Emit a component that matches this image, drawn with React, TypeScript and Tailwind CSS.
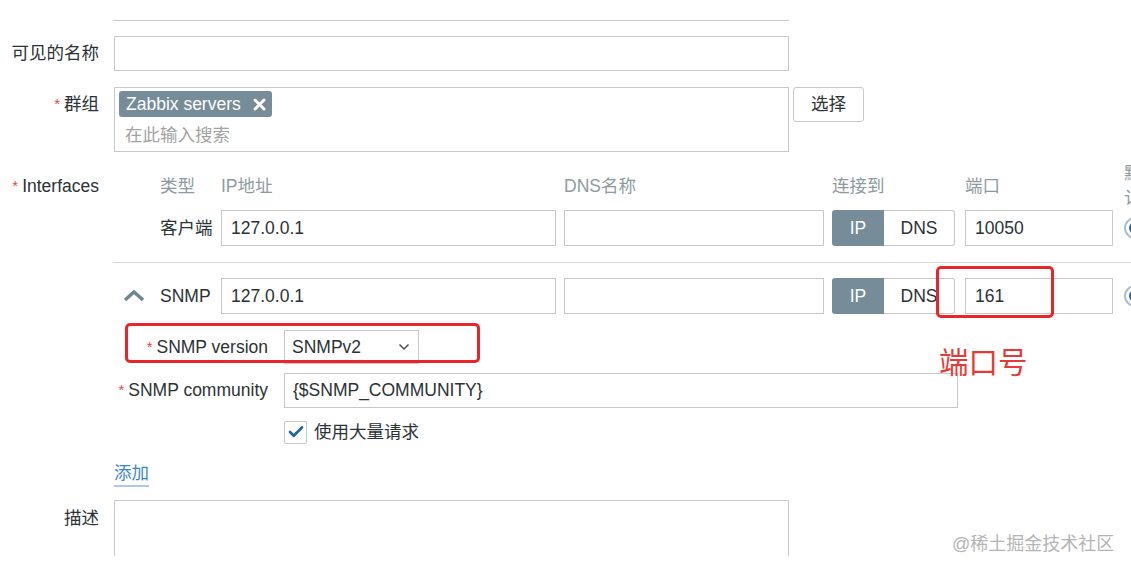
import { Check, ChevronDown } from 'lucide-react';

const font = "font-['Liberation_Sans','Noto_Sans_CJK_SC',sans-serif]";

function Star() {
  return <span className="text-[#d64e4e] mr-[4px] text-[15px]">*</span>;
}

function Label({ children, req }: { children: React.ReactNode; req?: boolean }) {
  return (
    <div className="w-[99px] shrink-0 h-[35px] flex items-center justify-end whitespace-nowrap">
      {req && <Star />}
      {children}
    </div>
  );
}

function Radio() {
  return (
    <div className="w-[22px] h-[22px] shrink-0 rounded-full border-2 border-[#a9bfcf] flex items-center justify-center">
      <div className="w-[12px] h-[12px] rounded-full bg-[#1f65a6]" />
    </div>
  );
}

function Toggle() {
  return (
    <div className="flex w-[123px] h-[36px] shrink-0">
      <div className="w-[52px] flex items-center justify-center bg-[#768d99] text-white rounded-l-[3px]">IP</div>
      <div className="flex-1 flex items-center justify-center border border-l-0 border-[#c8c8c8] rounded-r-[3px]">DNS</div>
    </div>
  );
}

function IfaceRow({ type, port, chevron }: { type: string; port: string; chevron?: boolean }) {
  return (
    <div className="flex items-center gap-[8px] h-[36px]">
      <div className="w-[100px] shrink-0 flex items-center">
        <div className="w-[47px] pl-[10px]">
          {chevron && (
            <svg width="22" height="12" viewBox="0 0 22 12">
              <polyline points="2,10 11,2 20,10" fill="none" stroke="#6f8791" strokeWidth="3.5" />
            </svg>
          )}
        </div>
        <span>{type}</span>
      </div>
      <div className="w-[335px] h-[36px] shrink-0 border border-[#c8c8c8] flex items-center px-[9px]">127.0.0.1</div>
      <div className="w-[260px] h-[36px] shrink-0 border border-[#c8c8c8]" />
      <Toggle />
      <div className="w-[148px] h-[36px] shrink-0 border border-[#c8c8c8] flex items-center px-[9px] ml-[2px]">{port}</div>
      <div className="ml-[3px]">
        <Radio />
      </div>
    </div>
  );
}

export default function App() {
  return (
    <div className={`relative w-[1131px] h-[571px] overflow-hidden bg-white text-[17.5px] text-[#2b3236] ${font}`}>
      <div className="flex flex-col">
        {/* cut-off field at the top */}
        <div className="ml-[113px] w-[676px] h-[21px] border-b border-[#c8c8c8]" />

        {/* visible name */}
        <div className="flex gap-[15px] mt-[15px]">
          <Label>可见的名称</Label>
          <div className="w-[675px] h-[35px] border border-[#c8c8c8]" />
        </div>

        {/* groups */}
        <div className="flex gap-[15px] mt-[16px]">
          <Label req>群组</Label>
          <div className="w-[675px] h-[65px] border border-[#c8c8c8] px-[4px] pt-[3px]">
            <div className="inline-flex items-center h-[26px] bg-[#768d99] text-white rounded-[3px] pl-[7px] pr-[6px] gap-[12px]">
              <span>Zabbix servers</span>
              <svg width="13" height="13" viewBox="0 0 13 13">
                <path d="M2 2 L11 11 M11 2 L2 11" stroke="white" strokeWidth="3" strokeLinecap="round" />
              </svg>
            </div>
            <div className="text-[#a3a3a3] mt-[3px] pl-[6px] leading-[30px]">在此输入搜索</div>
          </div>
          <div className="-ml-[11px] w-[71px] h-[35px] border border-[#c8c8c8] rounded-[3px] flex items-center justify-center">
            选择
          </div>
        </div>

        {/* interfaces */}
        <div className="flex mt-[20px]">
          <div className="w-[99px] shrink-0 h-[28px] flex items-center justify-end whitespace-nowrap">
            <Star />
            Interfaces
          </div>
          <div className="ml-[14px] flex flex-col">
            <div className="flex items-center gap-[8px] h-[28px] text-[#8e9aa1]">
              <div className="w-[100px] shrink-0 pl-[47px]">类型</div>
              <div className="w-[335px] shrink-0">IP地址</div>
              <div className="w-[260px] shrink-0">DNS名称</div>
              <div className="w-[123px] shrink-0">连接到</div>
              <div className="w-[148px] shrink-0 ml-[2px]">端口</div>
              <div className="w-[18px] shrink-0 ml-[3px] leading-[25px] break-all">默认</div>
            </div>
            <div className="mt-[10px]">
              <IfaceRow type="客户端" port="10050" />
            </div>
            <div className="mt-[16px] w-[1100px] border-t border-[#d6d6d6]" />
            <div className="mt-[15px]">
              <IfaceRow type="SNMP" port="161" chevron />
            </div>

            {/* SNMP details */}
            <div className="flex gap-[16px] mt-[16px] items-center">
              <div className="w-[155px] shrink-0 flex items-center justify-end whitespace-nowrap">
                <Star />
                SNMP version
              </div>
              <div className="w-[135px] h-[34px] border border-[#c8c8c8] flex items-center justify-between pl-[7px] pr-[6px]">
                <span>SNMPv2</span>
                <ChevronDown className="w-[16px] h-[16px] text-[#555]" strokeWidth={2.5} />
              </div>
            </div>
            <div className="flex gap-[16px] mt-[9px] items-center">
              <div className="w-[155px] shrink-0 flex items-center justify-end whitespace-nowrap">
                <Star />
                SNMP community
              </div>
              <div className="w-[674px] h-[35px] border border-[#c8c8c8] flex items-center px-[8px]">{'{$SNMP_COMMUNITY}'}</div>
            </div>
            <div className="flex items-center gap-[7px] mt-[11px] ml-[171px]">
              <div className="w-[23px] h-[23px] border border-[#c8c8c8] rounded-[2px] flex items-center justify-center">
                <Check className="w-[18px] h-[18px] text-[#1f65a6]" strokeWidth={3.5} />
              </div>
              <span>使用大量请求</span>
            </div>
            <div className="mt-[15px] ml-[1px]">
              <span className="text-[#3d86c6] border-b-2 border-[#a9cbe8] leading-[24px] inline-block">添加</span>
            </div>
          </div>
        </div>

        {/* description */}
        <div className="flex gap-[15px] mt-[13px]">
          <Label>描述</Label>
          <div className="w-[675px] h-[70px] border border-b-0 border-[#c8c8c8]" />
        </div>
      </div>

      {/* annotations */}
      <div className="absolute left-[125px] top-[323px] w-[355px] h-[40px] border-[3px] border-[#e8262a] rounded-[5px]" />
      <div className="absolute left-[936px] top-[266px] w-[118px] h-[52px] border-[3px] border-[#e8262a] rounded-[5px]" />
      <div className="absolute left-[939px] top-[343px] text-[29.5px] leading-[40px] text-[#e63a36]">端口号</div>
      <div className="absolute left-[952px] top-[532px] text-[18px] leading-[24px] text-[#b4b4b4]">@稀土掘金技术社区</div>
      <div className="absolute left-0 top-[556px] w-full h-[15px] bg-white" />
    </div>
  );
}
